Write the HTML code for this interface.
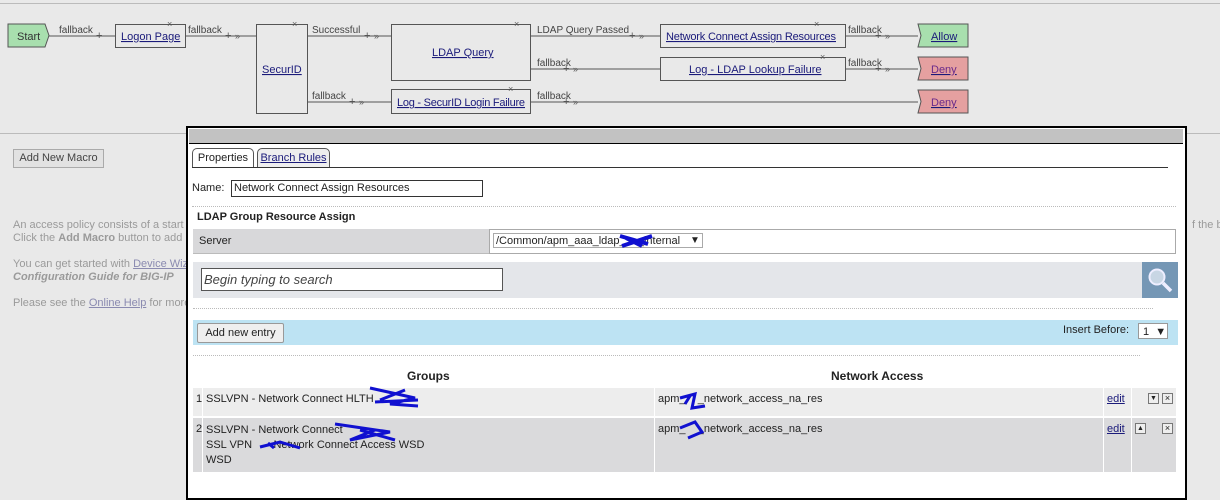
<!DOCTYPE html>
<html><head><meta charset="utf-8"><style>
body{margin:0;width:1220px;height:486px;background:#e9e9e9;font-family:"Liberation Sans",Arial,sans-serif;font-size:11px;color:#222;position:relative;overflow:hidden}
.a{position:absolute;white-space:nowrap}
a{color:#1a1a7a;text-decoration:underline}
.g{color:#9a9a9a;font-size:11px}
.dot{border-top:1px dotted #bbb;height:0}
</style></head><body>
<div class="a" style="left:0;top:3px;width:1220px;height:1px;background:#bbb"></div>
<svg class="a" style="left:0;top:0" width="1220" height="125" font-family="Liberation Sans,Arial,sans-serif" font-size="10">
<g stroke="#555" fill="none" stroke-width="1">
<path d="M48 36H115M185 36H256M307 36H391M530 36H660M845 36H918M530 69H660M845 69H918M307 102H391M530 102H918"/>
</g>
<g fill="#555" font-size="11">
<text x="96" y="39">+</text><text x="225" y="39">+</text><text x="364" y="39">+</text><text x="629" y="39">+</text><text x="875" y="39">+</text>
<text x="563" y="72">+</text><text x="875" y="72">+</text><text x="349" y="105">+</text><text x="563" y="105">+</text>
<text x="235" y="39" font-size="9">»</text><text x="374" y="39" font-size="9">»</text><text x="639" y="39" font-size="9">»</text><text x="885" y="39" font-size="9">»</text>
<text x="573" y="72" font-size="9">»</text><text x="885" y="72" font-size="9">»</text><text x="359" y="105" font-size="9">»</text><text x="573" y="105" font-size="9">»</text>
</g>
<g fill="#444">
<text x="59" y="33">fallback</text><text x="188" y="33">fallback</text><text x="312" y="33">Successful</text><text x="537" y="33">LDAP Query Passed</text><text x="848" y="33">fallback</text>
<text x="537" y="66">fallback</text><text x="848" y="66">fallback</text><text x="312" y="99">fallback</text><text x="537" y="99">fallback</text>
</g>
<path d="M8 24H45L49 35.5L45 47H8Z" fill="#a8dfae" stroke="#555"/>
<text x="17" y="40" font-size="11" fill="#333">Start</text>
<g fill="#e9e9e9" stroke="#555">
<rect x="115.5" y="24.5" width="70" height="23"/><rect x="256.5" y="24.5" width="51" height="89"/>
<rect x="391.5" y="24.5" width="139" height="56"/><rect x="391.5" y="89.5" width="139" height="24"/>
<rect x="660.5" y="24.5" width="185" height="23"/><rect x="660.5" y="57.5" width="185" height="23"/>
</g>
<path d="M918 24H968V47H918L921 35.5Z" fill="#a8dfae" stroke="#555"/>
<path d="M918 57H968V80H918L921 68.5Z" fill="#e5a0a0" stroke="#555"/>
<path d="M918 90H968V113H918L921 101.5Z" fill="#e5a0a0" stroke="#555"/>
<g fill="#555" font-size="9"><text x="167" y="27">×</text><text x="292" y="27">×</text><text x="514" y="27">×</text><text x="508" y="92">×</text><text x="814" y="27">×</text><text x="820" y="60">×</text></g>
<g fill="#1a1a7a" font-size="11" text-decoration="underline">
<text x="121" y="40">Logon Page</text><text x="262" y="73">SecurID</text><text x="432" y="56">LDAP Query</text><text x="397" y="106" textLength="128">Log - SecurID Login Failure</text>
<text x="666" y="40" textLength="170">Network Connect Assign Resources</text><text x="689" y="73">Log - LDAP Lookup Failure</text>
<text x="931" y="40">Allow</text><text x="931" y="73" fill="#6a2a8a">Deny</text><text x="931" y="106" fill="#6a2a8a">Deny</text>
</g>
</svg>
<div class="a" style="left:0;top:133px;width:186px;height:1px;background:#bbb"></div>
<div class="a" style="left:1187px;top:133px;width:33px;height:1px;background:#bbb"></div>
<div class="a" style="left:13px;top:149px;width:89px;height:17px;border:1px solid #aaa;background:#e2e2e2;color:#444;line-height:17px;text-align:center">Add New Macro</div>
<div class="a g" style="left:13px;top:219px;line-height:13px">An access policy consists of a start p<br>Click the <b>Add Macro</b> button to add</div>
<div class="a g" style="left:13px;top:258px;line-height:13px">You can get started with <u style="color:#8a8ab0">Device Wiz</u><br><b><i>Configuration Guide for BIG-IP</i></b></div>
<div class="a g" style="left:13px;top:297px">Please see the <u style="color:#8a8ab0">Online Help</u> for more</div>
<div class="a g" style="left:1192px;top:219px">f the bo</div>

<div class="a" style="left:186px;top:126px;width:997px;height:370px;border:2px solid #000;background:#fff"></div>
<div class="a" style="left:189px;top:129px;width:994px;height:14px;background:#c2c2c2;border-bottom:1px solid #000"></div>
<div class="a" style="left:192px;top:148px;width:60px;height:19px;border:1px solid #555;border-bottom:none;border-radius:5px 5px 0 0;line-height:19px;text-align:center">Properties</div>
<div class="a" style="left:257px;top:148px;width:71px;height:18px;border:1px solid #555;border-radius:5px 5px 0 0;line-height:19px;text-align:center;background:#eee"><a>Branch Rules</a></div>
<div class="a" style="left:192px;top:167px;width:976px;height:1px;background:#333"></div>
<div class="a" style="left:192px;top:182px">Name:</div>
<div class="a" style="left:231px;top:180px;width:248px;height:15px;border:1px solid #333;line-height:15px;padding-left:2px">Network Connect Assign Resources</div>
<div class="a dot" style="left:192px;top:206px;width:984px"></div>
<div class="a" style="left:197px;top:211px;font-weight:bold;font-size:11px">LDAP Group Resource Assign</div>
<div class="a" style="left:193px;top:229px;width:296px;height:25px;background:#d8d8da;border-bottom:1px solid #bbb;line-height:25px;padding-left:6px;box-sizing:border-box">Server</div>
<div class="a" style="left:489px;top:229px;width:687px;height:25px;border:1px solid #aaa;box-sizing:border-box"></div>
<div class="a" style="left:493px;top:233px;width:210px;height:15px;border:1px solid #aaa;line-height:15px;padding-left:2px;box-sizing:border-box;overflow:hidden">/Common/apm_aaa_ldap_&nbsp;&nbsp;&nbsp;&nbsp;_internal</div>
<div class="a" style="left:690px;top:235px;font-size:10px">▼</div>
<svg class="a" style="left:618px;top:232px" width="40" height="18"><path d="M2 4L30 12M4 14L34 4M8 6L24 14" stroke="#1010d0" stroke-width="4"/></svg>
<div class="a" style="left:193px;top:262px;width:949px;height:36px;background:#e4e6ea"></div>
<div class="a" style="left:201px;top:268px;width:298px;height:21px;border:1px solid #555;background:#fff;font-style:italic;font-size:13px;line-height:21px;padding-left:2px;color:#444">Begin typing to search</div>
<div class="a" style="left:1142px;top:262px;width:36px;height:36px;background:#7597b5"></div>
<svg class="a" style="left:1142px;top:262px" width="36" height="36"><circle cx="15" cy="15" r="7.5" fill="#c8d6e4" stroke="#eef" stroke-width="2"/><path d="M21 21L29 29" stroke="#eef" stroke-width="3.5"/></svg>
<div class="a dot" style="left:193px;top:308px;width:960px"></div>
<div class="a" style="left:193px;top:320px;width:985px;height:25px;background:#bde3f3"></div>
<div class="a" style="left:197px;top:323px;width:85px;height:18px;border:1px solid #999;border-radius:2px;background:#efefef;line-height:18px;text-align:center">Add new entry</div>
<div class="a" style="left:1063px;top:324px">Insert Before:</div>
<div class="a" style="left:1138px;top:323px;width:30px;height:16px;border:1px solid #999;background:#fff;line-height:16px;padding-left:4px;box-sizing:border-box">1 &nbsp;▼</div>
<div class="a dot" style="left:193px;top:355px;width:947px"></div>
<div class="a" style="left:407px;top:369px;font-weight:bold;font-size:12px">Groups</div>
<div class="a" style="left:831px;top:369px;font-weight:bold;font-size:12px">Network Access</div>
<div class="a" style="left:193px;top:388px;width:983px;height:28px;background:#ededed"></div>
<div class="a" style="left:193px;top:418px;width:983px;height:54px;background:#dadadc"></div>
<div class="a" style="left:202px;top:388px;width:1px;height:84px;background:#fff"></div>
<div class="a" style="left:654px;top:388px;width:1px;height:84px;background:#fff"></div>
<div class="a" style="left:1103px;top:388px;width:1px;height:84px;background:#fff"></div>
<div class="a" style="left:1131px;top:388px;width:1px;height:84px;background:#fff"></div>
<div class="a" style="left:196px;top:393px">1</div>
<div class="a" style="left:206px;top:393px">SSLVPN - Network Connect HLTH</div>
<div class="a" style="left:196px;top:423px">2</div>
<div class="a" style="left:206px;top:423px;line-height:15px">SSLVPN - Network Connect<br>SSL VPN &nbsp;&nbsp;&nbsp;&nbsp;&nbsp;&nbsp;Network Connect Access WSD<br>WSD</div>
<div class="a" style="left:658px;top:393px">apm_&nbsp;&nbsp;&nbsp;&nbsp;_network_access_na_res</div>
<div class="a" style="left:658px;top:423px">apm_&nbsp;&nbsp;&nbsp;&nbsp;_network_access_na_res</div>
<svg class="a" style="left:240px;top:380px" width="480" height="75"><g stroke="#1010d0" stroke-width="3" fill="none">
<path d="M130 8L175 18L150 24L178 26M140 20L165 10M135 22L178 20"/>
<path d="M95 44L150 52L110 60L135 50M120 50L155 60"/>
<path d="M20 67L40 62L60 68M28 63L34 68"/>
<path d="M440 18L455 14L452 28L465 26M445 24L450 16"/>
<path d="M440 48L455 42L462 52L448 58"/>
</g></svg>
<div class="a" style="left:1107px;top:393px"><a>edit</a></div>
<div class="a" style="left:1107px;top:423px"><a>edit</a></div>
<div class="a" style="left:1148px;top:393px;width:9px;height:9px;border:1px solid #777;background:#eee;font-size:7px;line-height:9px;text-align:center">▼</div>
<div class="a" style="left:1162px;top:393px;width:9px;height:9px;border:1px solid #777;background:#eee;font-size:9px;line-height:9px;text-align:center">×</div>
<div class="a" style="left:1135px;top:423px;width:9px;height:9px;border:1px solid #777;background:#eee;font-size:7px;line-height:9px;text-align:center">▲</div>
<div class="a" style="left:1162px;top:423px;width:9px;height:9px;border:1px solid #777;background:#eee;font-size:9px;line-height:9px;text-align:center">×</div>
</body></html>
